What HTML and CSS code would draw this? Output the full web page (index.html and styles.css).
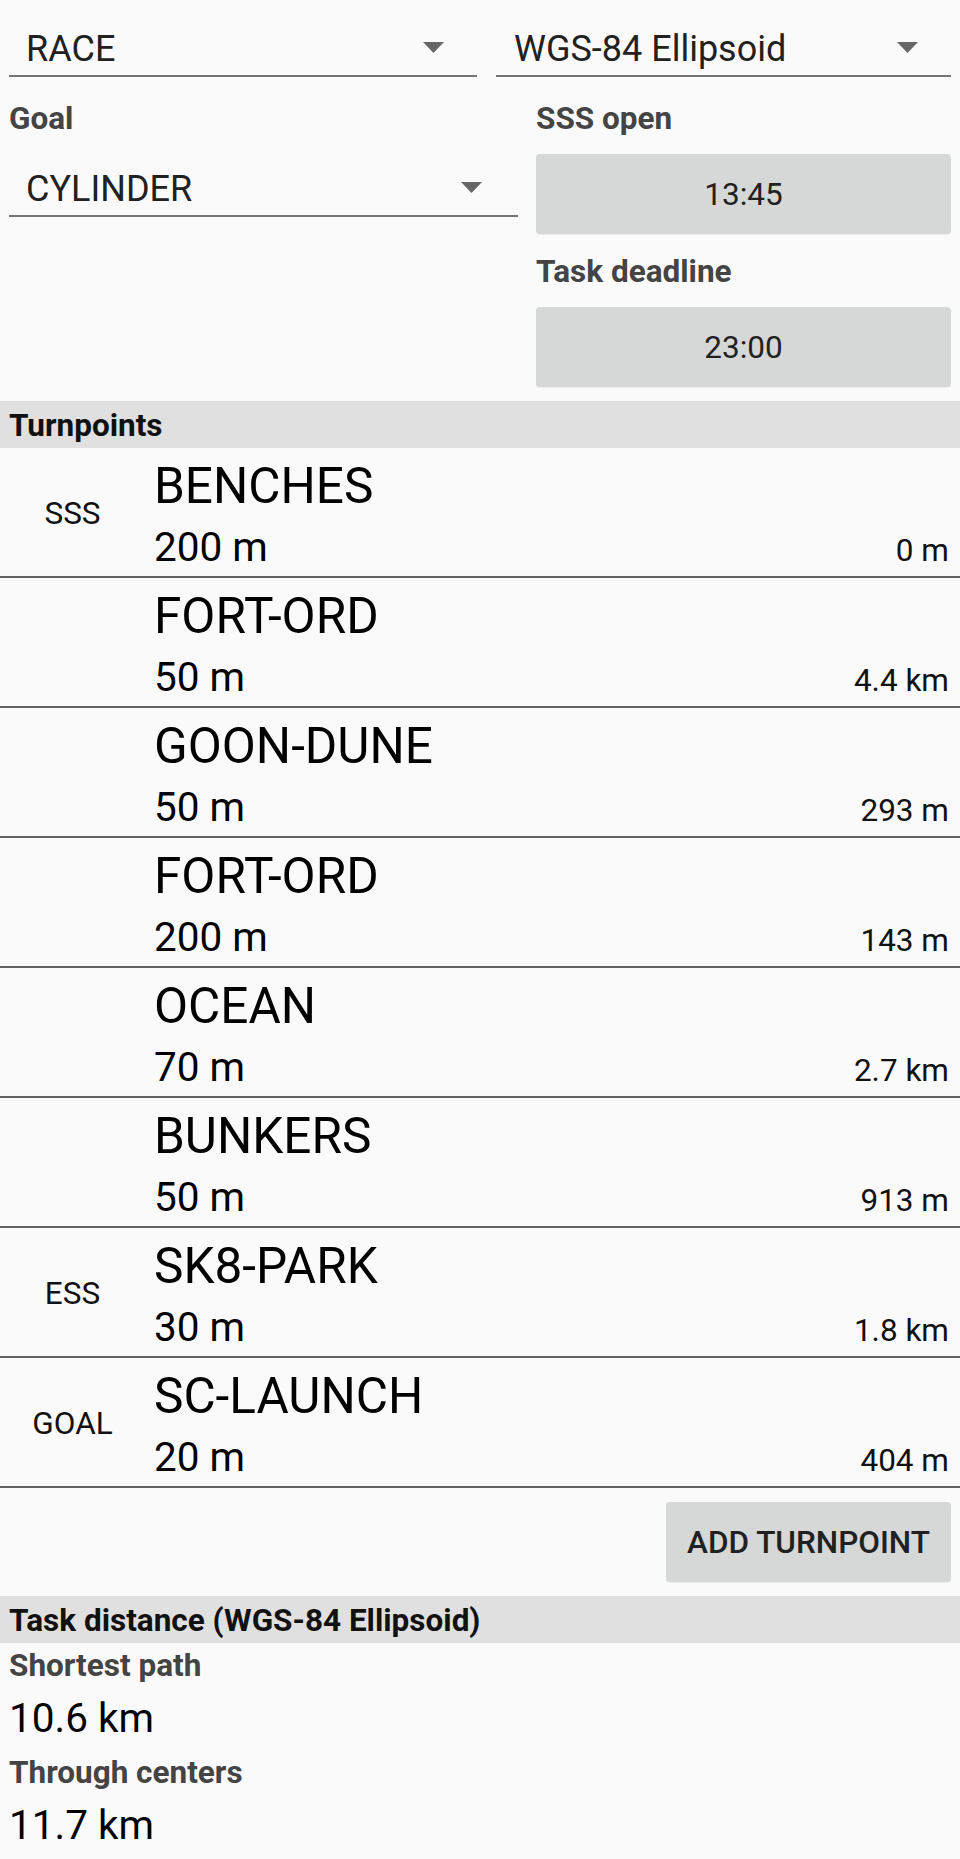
FILE: index.html
```html
<!DOCTYPE html>
<html lang="en">
<head>
<meta charset="utf-8">
<title>Task</title>
<link rel="stylesheet" href="styles.css">
</head>
<body>
<div class="page">
  <div class="top-row">
    <div class="spinner spinner-type">
      <span class="spinner-text">RACE</span>
      <svg class="arrow" width="21" height="11" viewBox="0 0 21 11"><polygon points="0,0 21,0 10.5,11"/></svg>
    </div>
    <div class="spinner spinner-earth">
      <span class="spinner-text">WGS-84 Ellipsoid</span>
      <svg class="arrow" width="21" height="11" viewBox="0 0 21 11"><polygon points="0,0 21,0 10.5,11"/></svg>
    </div>
  </div>

  <div class="params">
    <div class="col col-left">
      <div class="label label-goal">Goal</div>
      <div class="spinner spinner-goal">
        <span class="spinner-text">CYLINDER</span>
        <svg class="arrow" width="21" height="11" viewBox="0 0 21 11"><polygon points="0,0 21,0 10.5,11"/></svg>
      </div>
    </div>
    <div class="col col-right">
      <div class="label label-sss">SSS open</div>
      <button class="btn btn-time btn-first">13:45</button>
      <div class="label label-deadline">Task deadline</div>
      <button class="btn btn-time btn-second">23:00</button>
    </div>
  </div>

  <div class="band band-turnpoints">Turnpoints</div>

  <ul class="tp-list">
    <li class="tp"><span class="tp-kind">SSS</span><div class="tp-main"><div class="tp-name">BENCHES</div><div class="tp-sub"><span class="tp-radius">200 m</span><span class="tp-dist">0 m</span></div></div></li>
    <li class="tp"><span class="tp-kind"></span><div class="tp-main"><div class="tp-name">FORT-ORD</div><div class="tp-sub"><span class="tp-radius">50 m</span><span class="tp-dist">4.4 km</span></div></div></li>
    <li class="tp"><span class="tp-kind"></span><div class="tp-main"><div class="tp-name">GOON-DUNE</div><div class="tp-sub"><span class="tp-radius">50 m</span><span class="tp-dist">293 m</span></div></div></li>
    <li class="tp"><span class="tp-kind"></span><div class="tp-main"><div class="tp-name">FORT-ORD</div><div class="tp-sub"><span class="tp-radius">200 m</span><span class="tp-dist">143 m</span></div></div></li>
    <li class="tp"><span class="tp-kind"></span><div class="tp-main"><div class="tp-name">OCEAN</div><div class="tp-sub"><span class="tp-radius">70 m</span><span class="tp-dist">2.7 km</span></div></div></li>
    <li class="tp"><span class="tp-kind"></span><div class="tp-main"><div class="tp-name">BUNKERS</div><div class="tp-sub"><span class="tp-radius">50 m</span><span class="tp-dist">913 m</span></div></div></li>
    <li class="tp"><span class="tp-kind">ESS</span><div class="tp-main"><div class="tp-name">SK8-PARK</div><div class="tp-sub"><span class="tp-radius">30 m</span><span class="tp-dist">1.8 km</span></div></div></li>
    <li class="tp"><span class="tp-kind">GOAL</span><div class="tp-main"><div class="tp-name">SC-LAUNCH</div><div class="tp-sub"><span class="tp-radius">20 m</span><span class="tp-dist">404 m</span></div></div></li>
  </ul>

  <div class="add-row">
    <button class="btn btn-add">ADD TURNPOINT</button>
  </div>

  <div class="band band-distance">Task distance (WGS-84 Ellipsoid)</div>

  <div class="distances">
    <div class="label dist-label dist-label-first">Shortest path</div>
    <div class="dist-value">10.6 km</div>
    <div class="label dist-label dist-label-second">Through centers</div>
    <div class="dist-value">11.7 km</div>
  </div>
</div>
</body>
</html>
```

FILE: styles.css
```css
* { box-sizing: border-box; }

html, body {
  margin: 0;
  padding: 0;
  background: #fafafa;
}

body {
  font-family: Roboto, "Noto Sans", "Liberation Sans", sans-serif;
  color: #212121;
}

.page {
  width: 960px;
  min-height: 1859px;
  background: #fafafa;
}

/* ---------- spinners ---------- */
.top-row {
  display: grid;
  grid-template-columns: 468px 455px;
  column-gap: 19px;
  padding: 25px 9px 0;
}

.spinner {
  display: flex;
  align-items: center;
  justify-content: space-between;
  height: 52px;
  padding: 0 33px 2px 17px;
  border-bottom: 2px solid #757575;
}

.spinner-text {
  font-size: 36px;
  line-height: 48px;
  color: #212121;
}

.spinner-earth .spinner-text { padding-left: 1px; }

.arrow {
  display: block;
  fill: #666666;
  margin-bottom: 3px;
}

/* ---------- parameters ---------- */
.params {
  display: grid;
  grid-template-columns: 509px 415px;
  column-gap: 18px;
  padding: 0 9px;
}

.col {
  display: flex;
  flex-direction: column;
}

.label {
  font-size: 31.5px;
  line-height: 42px;
  font-weight: 700;
  color: #444444;
}

.label-goal { margin-top: 21px; }
.spinner-goal { margin-top: 25px; padding-right: 36px; }

.label-sss { margin-top: 21px; }
.label-deadline { margin-top: 17px; }

.btn {
  display: block;
  border: none;
  border-radius: 4px;
  background: #d6d7d7;
  box-shadow: 0 1px 1px rgba(0, 0, 0, 0.06);
  font-family: Roboto, "Noto Sans", "Liberation Sans", sans-serif;
  font-size: 31.5px;
  color: #212121;
  padding: 0;
  margin: 0;
}

.btn-time {
  width: 415px;
  height: 80px;
  font-weight: 400;
}

.btn-first { margin-top: 14px; }
.btn-second { margin-top: 14px; }

/* ---------- section bands ---------- */
.band {
  height: 47px;
  padding: 3px 9px 0;
  line-height: 44px;
  font-size: 31.5px;
  font-weight: 700;
  color: #111111;
  background: #e0e0e0;
}

.band-turnpoints { margin-top: 14px; }
.band-distance { margin-top: 14px; }

/* ---------- turnpoints ---------- */
.tp-list {
  list-style: none;
  margin: 0;
  padding: 0;
}

.tp {
  display: flex;
  height: 130px;
  border-bottom: 2px solid #616161;
}

.tp-kind {
  flex: 0 0 145px;
  padding-top: 47px;
  text-align: center;
  font-size: 31.5px;
  line-height: 37px;
  color: #111111;
}

.tp-main {
  flex: 1;
  margin-left: 9px;
  padding: 9px 11px 0 0;
  color: #000000;
}

.tp-name {
  font-size: 49.5px;
  line-height: 58px;
}

.tp-sub {
  display: flex;
  justify-content: space-between;
  align-items: baseline;
  margin-top: 8px;
}

.tp-radius {
  font-size: 40.5px;
  line-height: 48px;
}

.tp-dist {
  font-size: 31.5px;
  line-height: 37px;
  color: #111111;
}

/* ---------- add button ---------- */
.add-row {
  display: flex;
  justify-content: flex-end;
  padding: 14px 9px 0;
}

.btn-add {
  width: 285px;
  height: 80px;
  font-weight: 500;
}

/* ---------- distances ---------- */
.distances {
  display: flex;
  flex-direction: column;
  padding: 0 9px;
}

.dist-label-first { margin-top: 2px; }
.dist-label-second { margin-top: 10px; }

.dist-value {
  margin-top: 7px;
  font-size: 40.5px;
  line-height: 48px;
  color: #000000;
}
```
